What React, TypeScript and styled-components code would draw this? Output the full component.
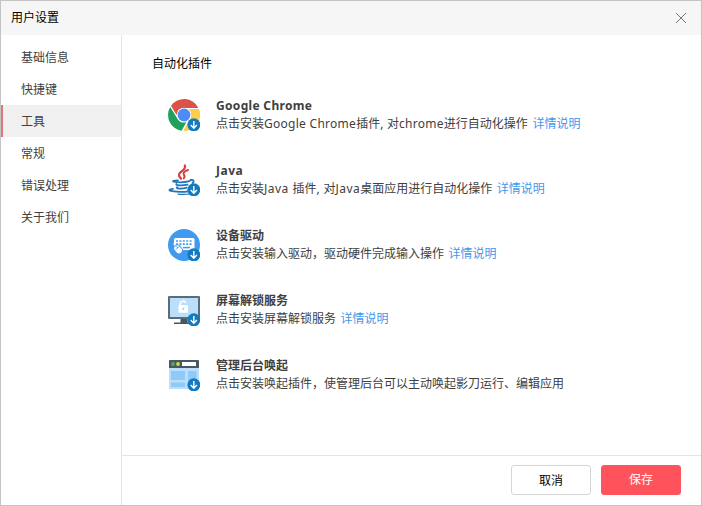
import React from 'react';
import styled, { createGlobalStyle } from 'styled-components';

const GlobalStyle = createGlobalStyle`
  *, *::before, *::after { box-sizing: border-box; }
  body { margin: 0; background: #fff; }
  button { font: inherit; cursor: pointer; }
`;

const Window = styled.div`
  width: 702px;
  height: 506px;
  display: flex;
  flex-direction: column;
  border: 1px solid #c4c4c4;
  background: #fff;
  color: #404040;
  font: 12px/16px 'Noto Sans', 'Noto Sans CJK SC', sans-serif;
  overflow: hidden;
`;

const TitleBar = styled.header`
  height: 34px;
  flex: none;
  display: flex;
  align-items: center;
  justify-content: space-between;
  padding: 0 14px 0 10px;
  background: #f6f6f6;
  color: #000;
`;

const CloseButton = styled.button`
  display: flex;
  padding: 0;
  border: 0;
  background: none;
`;

const Body = styled.div`
  flex: 1;
  display: flex;
  min-height: 0;
`;

const Sidebar = styled.nav`
  width: 121px;
  flex: none;
  display: flex;
  flex-direction: column;
  padding-top: 6px;
  border-right: 1px solid #e4e4e4;
`;

const NavItem = styled.a<{ $active?: boolean }>`
  height: 32px;
  display: flex;
  align-items: center;
  padding: 2px 0 0 18px;
  border-left: 2px solid ${(p) => (p.$active ? '#e0767c' : 'transparent')};
  background: ${(p) => (p.$active ? '#f0f0f0' : 'transparent')};
`;

const Main = styled.main`
  flex: 1;
  display: flex;
  flex-direction: column;
`;

const Content = styled.section`
  flex: 1;
  padding: 21px 0 0 30px;
`;

const Heading = styled.h1`
  margin: 0;
  font-size: 12px;
  font-weight: 400;
  line-height: 16px;
  color: #000;
`;

const PluginList = styled.div`
  display: flex;
  flex-direction: column;
  gap: 27px;
  padding: 24px 0 0 16px;
`;

const Plugin = styled.div`
  height: 38px;
  display: flex;
  gap: 16px;
`;

const IconBox = styled.div`
  width: 32px;
  height: 32px;
  margin-top: 3px;
`;

const PluginText = styled.div`
  white-space: pre;
`;

const PluginName = styled.div`
  font-weight: 700;
  line-height: 19px;
`;

const PluginDescription = styled.div`
  line-height: 17px;
`;

const Link = styled.a`
  margin-left: 4.5px;
  color: #3f98ea;
`;

const Latin = styled.span<{ $spacing: number }>`
  letter-spacing: ${(p) => p.$spacing}px;
`;

const Footer = styled.footer`
  height: 50px;
  flex: none;
  display: flex;
  justify-content: flex-end;
  gap: 10px;
  padding: 9px 20px 0 0;
  border-top: 1px solid #e4e4e4;
`;

const Button = styled.button<{ $primary?: boolean }>`
  width: 80px;
  height: 30px;
  padding: ${(p) => (p.$primary ? '0' : '2px 0 0')};
  border: 1px solid ${(p) => (p.$primary ? '#ff535c' : '#d6d6d6')};
  border-radius: 3px;
  background: ${(p) => (p.$primary ? '#ff535c' : '#fff')};
  color: ${(p) => (p.$primary ? '#fff' : '#000')};
`;

const Badge = () => (
  <g>
    <circle cx="25.8" cy="25.8" r="6.5" fill="#1479bd" />
    <path d="M25.8 22v7M22.7 26.1l3.1 3.1 3.1-3.1" fill="none" stroke="#fff" strokeWidth="1.4" />
  </g>
);

const Icon = ({ children }: { children: React.ReactNode }) => (
  <svg width="32" height="32" viewBox="0 0 32 32" display="block">
    {children}
    <Badge />
  </svg>
);

const ChromeIcon = () => (
  <Icon>
    <path d="M3 6.8A16 16 0 0 1 30.4 9H16a7.2 7.2 0 0 0-6.6 4.6L8.6 16z" fill="#dc5246" />
    <path d="M2.2 8 9.8 20.2a7.4 7.4 0 0 0 8.6 2.8L13.6 31.8A16 16 0 0 1 2.2 8z" fill="#1fa15d" />
    <path d="M19.4 10H31a16 16 0 0 1-15.8 22l7-12.2A7.4 7.4 0 0 0 19.4 10z" fill="#fdcd4d" />
    <circle cx="16" cy="16" r="7.3" fill="#fff" />
    <circle cx="16" cy="16" r="6.4" fill="#4d8bf5" />
  </Icon>
);

const JavaIcon = () => (
  <Icon>
    <g fill="none" stroke="#dc3a3b" strokeLinecap="round">
      <path d="M16.8 1.5c1.4 3-1.6 4.6-4.2 6.6-3 2.4-1.6 4.2.4 6.6" strokeWidth="2.2" />
      <path d="M20 6c-3.2 1.1-5.4 2.7-4.2 4.6 1.2 1.5 1.2 2.5-.1 3.8" strokeWidth="1.9" />
    </g>
    <g fill="none" stroke="#1f76b8" strokeLinecap="round" strokeWidth="1.8">
      <path d="M10 16.3c-4 .3-6.2.9-4.3 1.4 4 .8 11.5.6 15.8-.5" />
      <path d="M22.5 16c3.2-.7 4.2 1.3 2 3" />
      <path d="M8.5 20c-1.5 1.4 5.5 1.9 11 .6" />
      <path d="M9.2 23.2c-2.2 1.4 4.3 2.2 9.5.5" />
      <path d="M5 24.8c-4.5.6-4.8 1.8-.8 2.3 5 .9 11.8.8 16.5.2" />
      <path d="M10 30.2c5 .5 8.500.3 12-.2" strokeWidth="1.2" />
    </g>
  </Icon>
);

const DriverIcon = () => (
  <Icon>
    <circle cx="16" cy="16" r="16" fill="#409bf0" />
    <rect x="6" y="9" width="20.5" height="12" rx="1.5" fill="#fff" />
    <g stroke="#409bf0" strokeWidth="1.7" strokeDasharray="2 1.4">
      <path d="M8 12h17M8 15.2h17" />
    </g>
    <path d="M15 18.6h7" stroke="#409bf0" strokeWidth="1.5" />
    <path d="M5.5 14.5l4 3" stroke="#fff" strokeWidth="1.2" />
    <rect x="6.6" y="15.8" width="7" height="9.5" rx="3.5" fill="#fff" stroke="#409bf0" strokeWidth="1" transform="rotate(-43 10 20.5)" />
    <path d="M7.6 20.7l4.1-3.6M8.3 17.3l1.6 1.7" stroke="#409bf0" strokeWidth=".8" />
  </Icon>
);

const UnlockIcon = () => (
  <Icon>
    <rect x="0" y="2" width="32" height="23" rx="1" fill="#5a6c78" />
    <rect x="2" y="4" width="28" height="19" fill="#bbdefb" />
    <path d="M12.5 25h7v3.5H21V30H6v-1.5h6.5z" fill="#465761" />
    <path d="M12.2 12V9.9a2.9 2.9 0 0 1 5.6-.9" fill="none" stroke="#fff" strokeWidth="1.6" />
    <rect x="10.5" y="11" width="9.5" height="7.7" rx="1" fill="#fff" />
    <circle cx="15.3" cy="14.8" r="1.1" fill="#9bcaf4" />
  </Icon>
);

const BrowserIcon = () => (
  <Icon>
    <path d="M1 8h30v22H1z" fill="#bbdefb" />
    <path d="M2 1h28a1 1 0 0 1 1 1v7H1V2a1 1 0 0 1 1-1z" fill="#465a65" />
    <circle cx="5" cy="5" r="1.9" fill="#63a84a" />
    <circle cx="10" cy="5" r="1.9" fill="#c5dd4b" />
    <rect x="14" y="3" width="14" height="4" fill="#fff" />
    <path d="M3 12h14v9H3zM20 12h8.5v9H20zM3 23.5h14V28H3z" fill="#90caf9" />
  </Icon>
);

const NAV = ['基础信息', '快捷键', '工具', '常规', '错误处理', '关于我们'];

const PLUGINS = [
  {
    id: 'chrome',
    icon: <ChromeIcon />,
    name: <Latin $spacing={0.32}>Google Chrome</Latin>,
    text: (
      <>
        点击安装<Latin $spacing={0.27}>Google Chrome</Latin>插件<Latin $spacing={0.3}>, </Latin>对
        <Latin $spacing={0.27}>chrome</Latin>进行自动化操作
      </>
    ),
    link: true,
  },
  {
    id: 'java',
    icon: <JavaIcon />,
    name: <Latin $spacing={0.5}>Java</Latin>,
    text: (
      <>
        点击安装<Latin $spacing={0.5}>Java </Latin>插件<Latin $spacing={0.3}>, </Latin>对
        <Latin $spacing={0.5}>Java</Latin>桌面应用进行自动化操作
      </>
    ),
    link: true,
  },
  { id: 'driver', icon: <DriverIcon />, name: '设备驱动', text: '点击安装输入驱动，驱动硬件完成输入操作', link: true },
  { id: 'unlock', icon: <UnlockIcon />, name: '屏幕解锁服务', text: '点击安装屏幕解锁服务', link: true },
  { id: 'admin', icon: <BrowserIcon />, name: '管理后台唤起', text: '点击安装唤起插件，使管理后台可以主动唤起影刀运行、编辑应用', link: false },
];

export default function App() {
  return (
    <Window lang="zh-CN">
      <GlobalStyle />
      <TitleBar>
        用户设置
        <CloseButton aria-label="关闭">
          <svg width="12" height="12" viewBox="0 0 12 12">
            <path d="M1 1l10 10M11 1L1 11" stroke="#777" strokeWidth="1" />
          </svg>
        </CloseButton>
      </TitleBar>
      <Body>
        <Sidebar>
          {NAV.map((label) => (
            <NavItem key={label} $active={label === '工具'}>{label}</NavItem>
          ))}
        </Sidebar>
        <Main>
          <Content>
            <Heading>自动化插件</Heading>
            <PluginList>
              {PLUGINS.map((p) => (
                <Plugin key={p.id}>
                  <IconBox>{p.icon}</IconBox>
                  <PluginText>
                    <PluginName>{p.name}</PluginName>
                    <PluginDescription>
                      {p.text}
                      {p.link && <Link>详情说明</Link>}
                    </PluginDescription>
                  </PluginText>
                </Plugin>
              ))}
            </PluginList>
          </Content>
          <Footer>
            <Button>取消</Button>
            <Button $primary>保存</Button>
          </Footer>
        </Main>
      </Body>
    </Window>
  );
}
